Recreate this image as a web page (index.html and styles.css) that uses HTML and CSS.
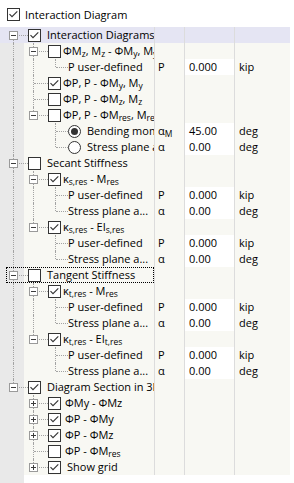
FILE: index.html
```html
<!DOCTYPE html>
<html>
<head>
<meta charset="utf-8">
<link rel="stylesheet" href="styles.css">
</head>
<body>
<div class="top">
  <i class="cb"><svg class="ck" viewBox="0 0 11 11"><path d="M1.5 5.2 L4 7.7 L9.3 2.3"/></svg></i>
  <span class="toplb">Interaction Diagram</span>
</div>
<div class="panel">
  <div class="row hd">
    <div class="tree"><span class="g f"><i class="exp"></i></span><i class="cb"><svg class="ck" viewBox="0 0 11 11"><path d="M1.5 5.2 L4 7.7 L9.3 2.3"/></svg></i><span class="lb">Interaction Diagrams</span></div>
    <div class="sym"></div><div class="val"></div><div class="unit"></div>
  </div>
  <div class="row">
    <div class="tree"><span class="g v"></span><span class="g t"><i class="exp"></i></span><i class="cb"></i><span class="lb rich">ΦM<sub class="s">z</sub>, M<sub class="s">z</sub> - ΦM<sub class="s">y</sub>, M<sub class="s">y</sub></span></div>
    <div class="sym"></div><div class="val"></div><div class="unit"></div>
  </div>
  <div class="row">
    <div class="tree"><span class="g v"></span><span class="g v"></span><span class="g l d2"></span><span class="lb leaf">P user-defined</span></div>
    <div class="sym">P</div><div class="val edit">0.000</div><div class="unit">kip</div>
  </div>
  <div class="row">
    <div class="tree"><span class="g v"></span><span class="g t"></span><i class="cb"><svg class="ck" viewBox="0 0 11 11"><path d="M1.5 5.2 L4 7.7 L9.3 2.3"/></svg></i><span class="lb rich">ΦP, P - ΦM<sub class="s">y</sub>, M<sub class="s">y</sub></span></div>
    <div class="sym"></div><div class="val"></div><div class="unit"></div>
  </div>
  <div class="row">
    <div class="tree"><span class="g v"></span><span class="g t"></span><i class="cb"></i><span class="lb rich">ΦP, P - ΦM<sub class="s">z</sub>, M<sub class="s">z</sub></span></div>
    <div class="sym"></div><div class="val"></div><div class="unit"></div>
  </div>
  <div class="row">
    <div class="tree"><span class="g v"></span><span class="g l"><i class="exp"></i></span><i class="cb"></i><span class="lb rich">ΦP, P - ΦM<sub class="s">res</sub>, M<sub class="s">res</sub></span></div>
    <div class="sym"></div><div class="val"></div><div class="unit"></div>
  </div>
  <div class="row">
    <div class="tree"><span class="g v"></span><span class="g"></span><span class="g t d2"></span><i class="rb on"></i><span class="lb">Bending moment angle</span></div>
    <div class="sym">α<sub class="s">M</sub></div><div class="val edit">45.00</div><div class="unit">deg</div>
  </div>
  <div class="row">
    <div class="tree"><span class="g v"></span><span class="g"></span><span class="g l d2"></span><i class="rb"></i><span class="lb">Stress plane angle</span></div>
    <div class="sym">α</div><div class="val edit">0.00</div><div class="unit">deg</div>
  </div>
  <div class="row">
    <div class="tree"><span class="g t"><i class="exp"></i></span><i class="cb"></i><span class="lb">Secant Stiffness</span></div>
    <div class="sym"></div><div class="val"></div><div class="unit"></div>
  </div>
  <div class="row">
    <div class="tree"><span class="g v"></span><span class="g t"><i class="exp"></i></span><i class="cb"><svg class="ck" viewBox="0 0 11 11"><path d="M1.5 5.2 L4 7.7 L9.3 2.3"/></svg></i><span class="lb rich">κ<sub class="s">s,res</sub> - M<sub class="s">res</sub></span></div>
    <div class="sym"></div><div class="val"></div><div class="unit"></div>
  </div>
  <div class="row">
    <div class="tree"><span class="g v"></span><span class="g v"></span><span class="g t d2"></span><span class="lb leaf">P user-defined</span></div>
    <div class="sym">P</div><div class="val edit">0.000</div><div class="unit">kip</div>
  </div>
  <div class="row">
    <div class="tree"><span class="g v"></span><span class="g v"></span><span class="g l d2"></span><span class="lb leaf">Stress plane a...</span></div>
    <div class="sym">α</div><div class="val edit">0.00</div><div class="unit">deg</div>
  </div>
  <div class="row">
    <div class="tree"><span class="g v"></span><span class="g l"><i class="exp"></i></span><i class="cb"><svg class="ck" viewBox="0 0 11 11"><path d="M1.5 5.2 L4 7.7 L9.3 2.3"/></svg></i><span class="lb rich">κ<sub class="s">s,res</sub> - EI<sub class="s">s,res</sub></span></div>
    <div class="sym"></div><div class="val"></div><div class="unit"></div>
  </div>
  <div class="row">
    <div class="tree"><span class="g v"></span><span class="g"></span><span class="g t d2"></span><span class="lb leaf">P user-defined</span></div>
    <div class="sym">P</div><div class="val edit">0.000</div><div class="unit">kip</div>
  </div>
  <div class="row">
    <div class="tree"><span class="g v"></span><span class="g"></span><span class="g l d2"></span><span class="lb leaf">Stress plane a...</span></div>
    <div class="sym">α</div><div class="val edit">0.00</div><div class="unit">deg</div>
  </div>
  <div class="row focus">
    <div class="tree"><span class="g t"><i class="exp"></i></span><i class="cb"></i><span class="lb">Tangent Stiffness</span></div>
    <div class="sym"></div><div class="val"></div><div class="unit"></div>
  </div>
  <div class="row">
    <div class="tree"><span class="g v"></span><span class="g t"><i class="exp"></i></span><i class="cb"><svg class="ck" viewBox="0 0 11 11"><path d="M1.5 5.2 L4 7.7 L9.3 2.3"/></svg></i><span class="lb rich">κ<sub class="s">t,res</sub> - M<sub class="s">res</sub></span></div>
    <div class="sym"></div><div class="val"></div><div class="unit"></div>
  </div>
  <div class="row">
    <div class="tree"><span class="g v"></span><span class="g v"></span><span class="g t d2"></span><span class="lb leaf">P user-defined</span></div>
    <div class="sym">P</div><div class="val edit">0.000</div><div class="unit">kip</div>
  </div>
  <div class="row">
    <div class="tree"><span class="g v"></span><span class="g v"></span><span class="g l d2"></span><span class="lb leaf">Stress plane a...</span></div>
    <div class="sym">α</div><div class="val edit">0.00</div><div class="unit">deg</div>
  </div>
  <div class="row">
    <div class="tree"><span class="g v"></span><span class="g l"><i class="exp"></i></span><i class="cb"><svg class="ck" viewBox="0 0 11 11"><path d="M1.5 5.2 L4 7.7 L9.3 2.3"/></svg></i><span class="lb rich">κ<sub class="s">t,res</sub> - EI<sub class="s">t,res</sub></span></div>
    <div class="sym"></div><div class="val"></div><div class="unit"></div>
  </div>
  <div class="row">
    <div class="tree"><span class="g v"></span><span class="g"></span><span class="g t d2"></span><span class="lb leaf">P user-defined</span></div>
    <div class="sym">P</div><div class="val edit">0.000</div><div class="unit">kip</div>
  </div>
  <div class="row">
    <div class="tree"><span class="g v"></span><span class="g"></span><span class="g l d2"></span><span class="lb leaf">Stress plane a...</span></div>
    <div class="sym">α</div><div class="val edit">0.00</div><div class="unit">deg</div>
  </div>
  <div class="row">
    <div class="tree"><span class="g l"><i class="exp"></i></span><i class="cb"><svg class="ck" viewBox="0 0 11 11"><path d="M1.5 5.2 L4 7.7 L9.3 2.3"/></svg></i><span class="lb">Diagram Section in 3D</span></div>
    <div class="sym"></div><div class="val"></div><div class="unit"></div>
  </div>
  <div class="row">
    <div class="tree"><span class="g"></span><span class="g t"><i class="exp plus"></i></span><i class="cb"><svg class="ck" viewBox="0 0 11 11"><path d="M1.5 5.2 L4 7.7 L9.3 2.3"/></svg></i><span class="lb phi">ΦMy - ΦMz</span></div>
    <div class="sym"></div><div class="val"></div><div class="unit"></div>
  </div>
  <div class="row">
    <div class="tree"><span class="g"></span><span class="g t"><i class="exp plus"></i></span><i class="cb"><svg class="ck" viewBox="0 0 11 11"><path d="M1.5 5.2 L4 7.7 L9.3 2.3"/></svg></i><span class="lb phi">ΦP - ΦMy</span></div>
    <div class="sym"></div><div class="val"></div><div class="unit"></div>
  </div>
  <div class="row">
    <div class="tree"><span class="g"></span><span class="g t"><i class="exp plus"></i></span><i class="cb"><svg class="ck" viewBox="0 0 11 11"><path d="M1.5 5.2 L4 7.7 L9.3 2.3"/></svg></i><span class="lb phi">ΦP - ΦMz</span></div>
    <div class="sym"></div><div class="val"></div><div class="unit"></div>
  </div>
  <div class="row">
    <div class="tree"><span class="g"></span><span class="g t"></span><i class="cb"></i><span class="lb phi">ΦP - ΦM<sub class="s">res</sub></span></div>
    <div class="sym"></div><div class="val"></div><div class="unit"></div>
  </div>
  <div class="row">
    <div class="tree"><span class="g"></span><span class="g l"><i class="exp plus"></i></span><i class="cb"><svg class="ck" viewBox="0 0 11 11"><path d="M1.5 5.2 L4 7.7 L9.3 2.3"/></svg></i><span class="lb">Show grid</span></div>
    <div class="sym"></div><div class="val"></div><div class="unit"></div>
  </div>
</div>
</body>
</html>
```
FILE: styles.css
```css
html, body {
  margin: 0;
  padding: 0;
  background: #fff;
}
body {
  font-family: "Open Sans", "Noto Sans", "Liberation Sans", sans-serif;
  font-size: 11px;
  color: #000;
  width: 294px;
  height: 483px;
  overflow: hidden;
}
.top {
  height: 27px;
  box-sizing: border-box;
  padding: 2px 0 0 7px;
  display: flex;
  align-items: center;
}
.toplb {
  margin-left: 5px;
  line-height: 16px;
}
.panel {
  height: 456px;
  background: linear-gradient(to right, #e9e9e9 24px, #fff 24px);
}
.row {
  display: grid;
  grid-template-columns: 155px 30px 50px 55px;
  height: 16px;
  line-height: 16px;
}
.row > div {
  background: #f8f8f3;
  white-space: nowrap;
  overflow: hidden;
}
.row > .tree {
  display: flex;
  align-items: center;
  padding-left: 3px;
  background: linear-gradient(to right, #e9e9e9 24px, #f8f8f3 24px);
  border-right: 1px solid #dcdcdc;
}
.row > .sym {
  padding-left: 3px;
  border-right: 1px solid #dcdcdc;
}
.row > .val {
  padding-left: 4px;
  border-right: 1px solid #dcdcdc;
}
.row > .val.edit {
  background: #fff;
}
.row > .unit {
  padding-left: 4px;
}
.row.hd > div,
.row.hd > .tree {
  background: #e5e5f3;
}
.row.focus > .tree {
  position: relative;
}
.row.focus > .tree::after {
  content: "";
  position: absolute;
  left: 6px;
  right: 0;
  top: 0;
  bottom: 0;
  border: 1px dotted #000;
}
.row > div, .box, * {
  box-sizing: border-box;
}

/* tree guides */
.g {
  --x: 10px;
  position: relative;
  flex: none;
  width: 20px;
  height: 16px;
  display: flex;
  align-items: center;
}
.g.d2 {
  --x: 12px;
}
.g.v::before,
.g.t::before,
.g.l::before,
.g.f::before {
  content: "";
  position: absolute;
  left: var(--x);
  top: 0;
  bottom: 0;
  border-left: 1px dotted #a3a3a3;
}
.g.l::before {
  bottom: 8px;
}
.g.f::before {
  top: 8px;
}
.g.t::after,
.g.l::after,
.g.f::after {
  content: "";
  position: absolute;
  left: calc(var(--x) + 1px);
  top: 8px;
  width: calc(14px - var(--x) + 10px);
  border-top: 1px dotted #a3a3a3;
}

/* expander */
.exp {
  position: relative;
  z-index: 1;
  width: 9px;
  height: 9px;
  margin-left: 6px;
  border: 1px solid #9a9a9a;
  background: #fff;
}
.exp::before {
  content: "";
  position: absolute;
  left: 1px;
  top: 3px;
  width: 5px;
  height: 1px;
  background: #3c3c3c;
}
.exp.plus::after {
  content: "";
  position: absolute;
  left: 3px;
  top: 1px;
  width: 1px;
  height: 5px;
  background: #3c3c3c;
}

/* checkbox */
.cb {
  flex: none;
  display: block;
  width: 13px;
  height: 13px;
  margin-left: 5px;
  border: 1px solid #333;
  background: #fff;
}
.top .cb {
  margin-left: 0;
}
.ck {
  display: block;
  width: 11px;
  height: 11px;
  fill: none;
  stroke: #333;
  stroke-width: 1.1;
}

/* radio */
.rb {
  flex: none;
  display: flex;
  align-items: center;
  justify-content: center;
  width: 13px;
  height: 13px;
  margin-left: 5px;
  border: 1px solid #333;
  border-radius: 50%;
  background: #fff;
}
.rb.on::after {
  content: "";
  width: 7px;
  height: 7px;
  border-radius: 50%;
  background: #333;
}

/* labels */
.lb {
  margin-left: 6px;
  white-space: nowrap;
}
.lb.rich {
  margin-left: 2px;
}
.lb.phi {
  margin-left: 4px;
}
.lb.leaf {
  margin-left: 5px;
}
.s {
  font-size: 8.5px;
  vertical-align: -2px;
  line-height: 0;
}
```
